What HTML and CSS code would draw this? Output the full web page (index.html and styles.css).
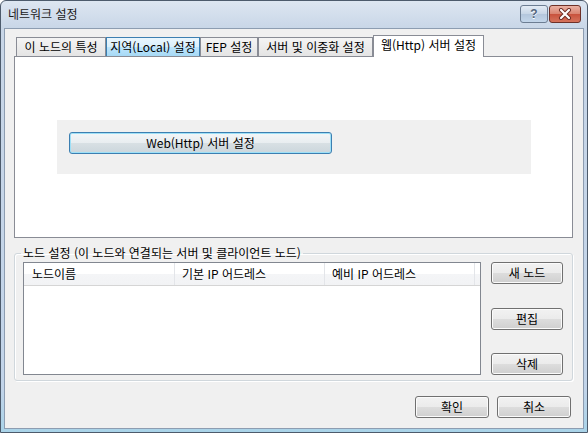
FILE: index.html
```html
<!DOCTYPE html>
<html lang="ko">
<head>
    <meta charset="UTF-8">
    <title>네트워크 설정</title>
    <link rel="stylesheet" href="styles.css">
</head>
<body>
    <div class="window">
        <div class="titlebar">
            <span class="title">네트워크 설정</span>
            <div class="caption-buttons">
                <button class="caption help">?</button>
                <button class="caption close">
                    <svg width="14" height="12" viewBox="0 0 14 12">
                        <path d="M3 2 L11 10 M11 2 L3 10" stroke="#6b2a22" stroke-width="4" stroke-linecap="round"/>
                        <path d="M3 2 L11 10 M11 2 L3 10" stroke="#ffffff" stroke-width="2.2" stroke-linecap="round"/>
                    </svg>
                </button>
            </div>
        </div>

        <div class="client">
            <div class="tabs">
                <div class="tab tab-node">이 노드의 특성</div>
                <div class="tab tab-local hover">지역(Local) 설정</div>
                <div class="tab tab-fep">FEP 설정</div>
                <div class="tab tab-server">서버 및 이중화 설정</div>
                <div class="tab tab-web selected">웹(Http) 서버 설정</div>
            </div>

            <div class="panel">
                <div class="web-box">
                    <button class="btn default web-btn">Web(Http) 서버 설정</button>
                </div>
            </div>

            <fieldset class="group">
                <legend>노드 설정 (이 노드와 연결되는 서버 및 클라이언트 노드)</legend>
                <div class="group-body">
                    <div class="listview">
                        <div class="list-header">
                            <div class="col">노드이름</div>
                            <div class="col">기본 IP 어드레스</div>
                            <div class="col">예비 IP 어드레스</div>
                        </div>
                    </div>
                    <div class="side-buttons">
                        <button class="btn side-btn">새 노드</button>
                        <button class="btn side-btn">편집</button>
                        <button class="btn side-btn">삭제</button>
                    </div>
                </div>
            </fieldset>

            <div class="dialog-buttons">
                <button class="btn dlg-btn">확인</button>
                <button class="btn dlg-btn">취소</button>
            </div>
        </div>
    </div>
</body>
</html>
```

FILE: styles.css
```css
* {
    box-sizing: border-box;
}
body {
    margin: 0;
    width: 588px;
    height: 433px;
    overflow: hidden;
    font-family: "Noto Sans CJK KR", "Noto Sans", sans-serif;
    font-size: 12px;
    color: #000;
    background: #fff;
}
.window {
    width: 588px;
    height: 433px;
    display: flex;
    flex-direction: column;
    border: 1px solid #4d5b6c;
    border-radius: 6px 6px 0 0;
    padding: 0 3px 3px 3px;
    background: linear-gradient(to bottom, #dde6f1, #c8d6e7 28px, #c2d4e9 90%, #a9d3e8);
}
.titlebar {
    height: 27px;
    display: flex;
    justify-content: space-between;
    align-items: flex-start;
}
.title {
    padding-left: 4px;
    line-height: 26px;
    color: #1a1a1a;
}
.caption-buttons {
    display: flex;
    gap: 1px;
    margin-top: 4px;
    margin-right: 3px;
}
.caption {
    height: 18px;
    padding: 0;
    border: 1px solid #6c7d92;
    border-radius: 3px;
    display: flex;
    align-items: center;
    justify-content: center;
}
.help {
    width: 28px;
    background: linear-gradient(to bottom, #e4ecf5, #c6d5e6 50%, #b3c6dc 50%, #c3d6ea);
    font-family: "Liberation Sans", sans-serif;
    font-weight: bold;
    font-size: 12px;
    color: #53657c;
    text-shadow: 0 1px 0 #fff;
}
.close {
    width: 32px;
    border-color: #6e3128;
    background: linear-gradient(to bottom, #eab1a3, #d98370 50%, #c8513c 50%, #d5735c);
}
.client {
    flex: 1;
    display: flex;
    flex-direction: column;
    background: #f0f0f0;
    border: 1px solid #8d9db1;
    padding: 6px 10px 10px 9px;
}

/* tabs */
.tabs {
    height: 21px;
    display: flex;
    align-items: flex-end;
    padding-left: 2px;
}
.tab {
    height: 19px;
    line-height: 17px;
    text-align: center;
    border: 1px solid #898c95;
    border-bottom: none;
    background: linear-gradient(to bottom, #f4f4f4, #e4e4e4);
    white-space: nowrap;
}
.tab-node { width: 90px; }
.tab-local { width: 94px; }
.tab-fep { width: 58px; }
.tab-server { width: 115px; }
.tab-web { width: 111px; }
.tab.hover {
    border-color: #3c7fb1;
    background: linear-gradient(to bottom, #eaf6fd, #d9f0fc 50%, #bee6fd 50%, #a7d9f5);
}
.tab.selected {
    position: relative;
    z-index: 1;
    height: 22px;
    line-height: 18px;
    margin-bottom: -1px;
    background: #fff;
}
.panel {
    height: 182px;
    border: 1px solid #898c95;
    background: #fff;
    padding: 63px 0 0 42px;
}
.web-box {
    width: 474px;
    height: 54px;
    background: #f0f0f0;
    padding: 12px;
}

/* buttons */
.btn {
    font-family: "Noto Sans CJK KR", "Noto Sans", sans-serif;
    font-size: 12px;
    color: #000;
    height: 22px;
    padding: 0;
    line-height: 20px;
    border: 1px solid #707070;
    border-radius: 3px;
    background: linear-gradient(to bottom, #f2f2f2, #ebebeb 50%, #dddddd 50%, #cfcfcf);
    box-shadow: inset 0 0 0 1px #fbfbfb;
}
.btn.default {
    border-color: #3c7fb1;
    background: linear-gradient(to bottom, #f3f6f8, #e8edf0 50%, #d8e0e4 50%, #cbd6dc);
    box-shadow: inset 0 0 0 1px #9ee0f7;
}
.web-btn {
    width: 263px;
}

/* node group */
.group {
    margin: 8px 0 0 0;
    min-width: 0;
    border: 1px solid #d0d7dc;
    border-radius: 3px;
    box-shadow: inset 1px 1px 0 #fff, 1px 1px 0 #fff;
    padding: 2px 9px 5px 8px;
}
.group legend {
    line-height: 14px;
    padding: 0 2px;
    margin-left: -2px;
}
.group-body {
    display: flex;
    gap: 10px;
}
.listview {
    width: 458px;
    height: 113px;
    border: 1px solid #828790;
    background: #fff;
}
.list-header {
    display: flex;
    height: 23px;
    background: linear-gradient(to bottom, #ffffff, #ffffff 50%, #f4f5f7 50%, #f2f3f5);
    border-bottom: 1px solid #d5d5d5;
}
.list-header .col {
    width: 150px;
    line-height: 22px;
    padding-left: 7px;
    border-right: 1px solid #e3e5e9;
}
.list-header .col:first-child {
    width: 151px;
    padding-left: 8px;
}
.side-buttons {
    display: flex;
    flex-direction: column;
    justify-content: space-between;
}
.side-btn {
    width: 72px;
}

.dialog-buttons {
    margin-top: 15px;
    margin-right: 2px;
    display: flex;
    justify-content: flex-end;
    gap: 8px;
}
.dlg-btn {
    width: 74px;
}
```
